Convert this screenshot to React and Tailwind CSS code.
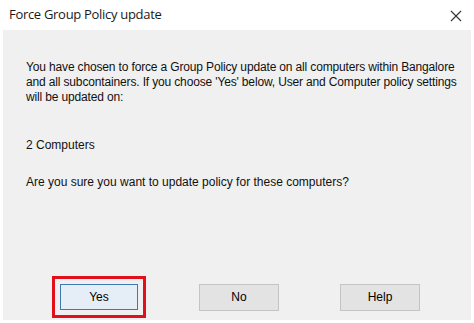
import React from 'react'

function Btn({ children, primary }) {
	return (
		<button
			className={
				primary
					? 'w-[78px] h-[26px] border border-[#3d7ab0] bg-[#e5eef7] text-[12px] text-black'
					: 'w-[80px] h-[27px] border border-[#c4c4c4] bg-[#e3e3e3] text-[12px] text-black'
			}
		>
			{children}
		</button>
	)
}

export default function App() {
	return (
		<div className="w-[474px] h-[323px] bg-white flex flex-col overflow-hidden font-['Liberation_Sans',sans-serif]">
			{/* title bar */}
			<div className="h-[30px] flex items-center justify-between pl-[9px] pr-[12px] shrink-0">
				<span className="text-[13px] text-[#1a1a1a] font-['Open_Sans',sans-serif] tracking-[-0.3px]">Force Group Policy update</span>
				<svg width="12" height="12" viewBox="0 0 12 12" className="mt-[1px]">
					<path d="M1 1 L11 11 M11 1 L1 11" stroke="#333" strokeWidth="1.1" />
				</svg>
			</div>

			{/* body */}
			<div className="mx-[3px] mb-[3px] flex-1 bg-[#f0f0f0] flex flex-col pl-[23px] pr-[6px] text-[12px] leading-[15px] text-[#111]">
				<p className="mt-[30px] tracking-[-0.15px]">
					You have chosen to force a Group Policy update on all computers within Bangalore and all subcontainers. If you choose 'Yes' below, User and Computer policy settings will be updated on:
				</p>
				<p className="mt-[33px]">2 Computers</p>
				<p className="mt-[22px]">Are you sure you want to update policy for these computers?</p>

				<div className="mt-auto mb-[2px] flex items-center">
					<div className="ml-[26px] border-[3px] border-[#e2101a] p-[5px]">
						<Btn primary>Yes</Btn>
					</div>
					<div className="ml-[53px]">
						<Btn>No</Btn>
					</div>
					<div className="ml-[61px]">
						<Btn>Help</Btn>
					</div>
				</div>
			</div>
		</div>
	)
}
